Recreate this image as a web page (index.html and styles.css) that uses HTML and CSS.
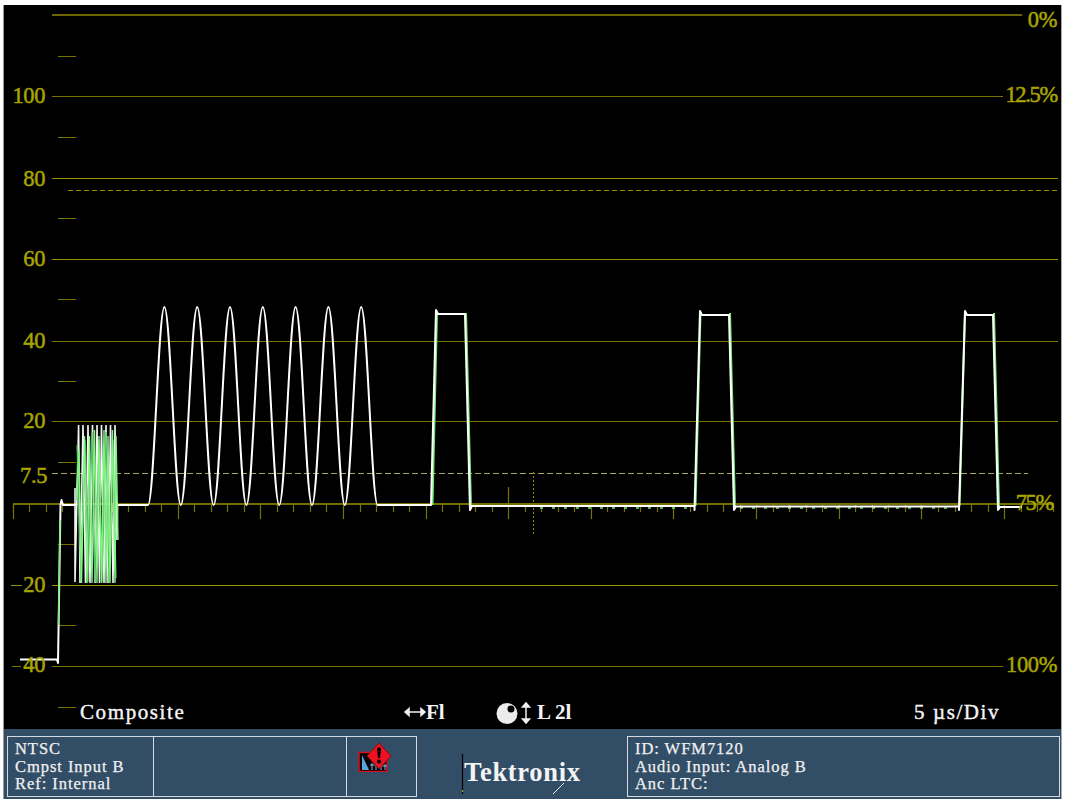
FILE: index.html
```html
<!DOCTYPE html>
<html lang="en">
<head>
<meta charset="utf-8">
<title>WFM7120 waveform monitor</title>
<link rel="stylesheet" href="styles.css">
</head>
<body>
<main class="frame">
  <svg class="scope" viewBox="4 5 1057 724" aria-label="Waveform display">
    <g class="grat">
      <path class="dim" d="M52 15H1022"/>
      <path class="mid" d="M52 96.500H1003M52 421.500H1058M52 341.500H1058M52 666.500H1003M12 666.500H21"/>
      <path class="bright" d="M52 178.500H1058M52 259.500H1058M52 585.500H1058M11 585.500H22"/>
      <path class="mid" d="M58 56.500H76M58 137.500H76M58 218.500H76M58 299.500H76M58 381.500H76M58 462.500H76M58 544.500H76M58 625.500H76M58 707.500H76"/>
      <path class="dash" d="M68 190.500H1058"/>
      <path class="dash2" d="M52 473.500H1028"/>
      <path class="base" d="M13 504H1054"/>
      <path class="mid" d="M13.500 504V512M29.500 504V512M46.500 504V512M62.500 504V512M79.500 504V512M112.500 504V512M128.500 504V512M145.500 504V512M161.500 504V512M194.500 504V512M211.500 504V512M227.500 504V512M244.500 504V512M277.500 504V512M293.500 504V512M310.500 504V512M326.500 504V512M360.500 504V512M376.500 504V512M393.500 504V512M409.500 504V512M442.500 504V512M459.500 504V512M475.500 504V512M492.500 504V512M525.500 504V512M541.500 504V512M558.500 504V512M574.500 504V512M607.500 504V512M624.500 504V512M640.500 504V512M657.500 504V512M690.500 504V512M707.500 504V512M723.500 504V512M740.500 504V512M773.500 504V512M789.500 504V512M806.500 504V512M822.500 504V512M855.500 504V512M872.500 504V512M888.500 504V512M905.500 504V512M938.500 504V512M955.500 504V512M971.500 504V512M988.500 504V512M1021.500 504V512M1037.500 504V512M1053.500 504V512"/>
      <path class="mid" d="M13.500 504V519M95.500 504V519M178.500 504V519M260.500 504V519M343.500 504V519M426.500 504V519M508.500 487V519M591.500 504V519M673.500 504V519M756.500 504V519M839.500 504V519M921.500 504V519M1004.500 504V519"/>
      <path class="dot" d="M533.500 472V535"/>
    </g>

    <g class="wave">
      <path class="trace-green" d="M432.500 505L437 313M466 313L471 507M695.500 506L700.500 313M730 313L735 507M959.500 506L965 313M994 313L999 507"/>
      <path class="trace-noise" d="M540 508H695M740 508H955"/>
      <polyline class="burst-white" points="75,488 75,582 78.600,425 80,583 83,425 85.500,583 88,425 90,583 92.500,425 95,583 97,425 99.500,583 101.500,425 104,583 106,425 108,583 110.500,425 113,583 115,425 117,540 117.500,505"/>
      <polyline class="burst-fill" points="77,445 81,580 85,440 88,582 92,432 95,582 99,440 102,582 106,432 109,582 113,440 116,578"/>
      <polyline class="burst-green" points="76,500 79,450 81.500,583 84.500,436 87,583 89.500,436 92,583 94.500,430 97,583 99,436 101.500,583 104,430 106,583 108,436 110,583 112.500,430 115,583 116,436 118,540"/>
      <path class="trace" d="M20 659.500H57L58 663L60.500 505L61.500 500L63 505H76M118 505H148c5.970 0 10.430-198 16.400-198c5.970 0 10.430 198 16.400 198c5.970 0 10.430-198 16.400-198c5.970 0 10.430 198 16.400 198c5.970 0 10.430-198 16.400-198c5.970 0 10.430 198 16.400 198c5.970 0 10.430-198 16.400-198c5.970 0 10.430 198 16.400 198c5.970 0 10.430-198 16.400-198c5.970 0 10.430 198 16.400 198c5.970 0 10.430-198 16.400-198c5.970 0 10.430 198 16.400 198c5.970 0 10.430-198 16.400-198c5.970 0 10.430 198 16.400 198H431L436 310L438 314H465L470 510L472 506H694.500V510L700 311L702 315H729L734 510L736 506.500H959V510L965 311L967 315H993L998 510L1000 507H1022"/>
      <path class="trace-top" d="M58.500 625L60 520"/>
    </g>

    <g class="lab">
      <text x="45" y="103">100</text>
      <text x="45" y="186">80</text>
      <text x="45" y="266">60</text>
      <text x="45" y="348">40</text>
      <text x="45" y="428">20</text>
      <text x="47" y="483">7.5</text>
      <text x="45" y="592">20</text>
      <text x="45" y="672">40</text>
    </g>
    <g class="lab">
      <text x="1057" y="27">0%</text>
      <text x="1057" y="102" class="tight">12.5%</text>
      <text x="1053" y="510" class="tight">75%</text>
      <text x="1057" y="672">100%</text>
    </g>

    <g class="hud">
      <text x="80" y="719" class="hud-wide">Composite</text>
      <text x="426" y="719">Fl</text>
      <text x="537" y="719">L 2l</text>
      <text x="914" y="719" class="hud-wide">5 µs/Div</text>
    </g>
    <path class="arrow" d="M405 712H425M409 708.500L405 712L409 715.500ZM421 708.500L425 712L421 715.500Z"/>
    <path class="arrow" d="M526 703V723M522.500 707L526 703L529.500 707ZM522.500 719L526 723L529.500 719Z"/>
    <circle class="knob" cx="507" cy="713.500" r="10.500"/>
    <circle class="knob-hole" cx="511" cy="709" r="3.500"/>
  </svg>

  <footer class="footer">
    <section class="box box-left">
      <div class="cell cell-a">
        <div>NTSC</div>
        <div>Cmpst Input B</div>
        <div>Ref: Internal</div>
      </div>
      <div class="cell cell-b"></div>
      <div class="cell cell-c">
        <svg class="alarm" viewBox="0 0 34 30" aria-label="Alarm">
          <rect x="1" y="10.500" width="28" height="19" fill="#000" stroke="#d8101c" stroke-width="1.500"/>
          <path d="M4 28V13L11 28Z" fill="#5aa6dc"/>
          <path d="M14 28V21M18 28V21M12 23H20M23 28V22M27 28V22M22 24H29" stroke="#7cc0ee" stroke-width="1" fill="none"/>
          <path d="M21 1L33 14L21 27L9 14Z" fill="#ee1120" stroke="#8e0a12" stroke-width="1"/>
          <path d="M19 7C19 5 23 5 23 7L22 16H20Z" fill="#000"/>
          <circle cx="21" cy="19.500" r="2" fill="#000"/>
        </svg>
      </div>
    </section>
    <div class="logo-area">
      <svg class="logo" viewBox="0 0 124 44" aria-label="Tektronix logo">
        <path d="M2.500 0V40" stroke="#000" stroke-width="1.200"/>
        <path d="M2.500 36V38" stroke="#a8a800" stroke-width="1.200"/>
        <text x="4" y="27" class="logo-text">Tektronix</text>
        <path d="M93 40L104 29" stroke="#f0f0f0" stroke-width="1"/>
      </svg>
    </div>
    <section class="box box-right">
      <div class="cell">
        <div>ID: WFM7120</div>
        <div>Audio Input: Analog B</div>
        <div>Anc LTC:</div>
      </div>
    </section>
  </footer>
</main>
</body>
</html>
```

FILE: styles.css
```css
html, body {
  margin: 0;
  padding: 0;
  background: #fff;
}
.frame {
  width: 1057px;
  height: 794px;
  margin: 5px 0 0 4px;
  display: flex;
  flex-direction: column;
  font-family: "Liberation Serif", serif;
  box-shadow: -1px 0 0 #999, 1px 0 0 #aaa;
}
.scope {
  display: block;
  width: 1057px;
  height: 724px;
  flex: none;
  background: #000;
}
.grat path { fill: none; stroke-width: 1.2; }
.grat .dim { stroke: #6b6600; stroke-width: 1.8; }
.mid { stroke: #787400; }
.bright { stroke: #969200; }
.grat .base { stroke: #9a9600; stroke-width: 1.4; }
.dash { stroke: #949000; stroke-dasharray: 5 3; }
.dash2 { stroke: #a8a660; stroke-dasharray: 6 3; }
.grat .dot { stroke: #8f8b00; stroke-dasharray: 2 2; stroke-width: 1; }
.wave path, .wave polyline { fill: none; }
.trace { stroke: #fff; stroke-width: 2; stroke-linejoin: round; }
.trace-top { stroke: #78f078; stroke-width: 1.500; }
.trace-green { stroke: #6fe86f; stroke-width: 2; }
.trace-noise { stroke: #6fe86f; stroke-width: 1.500; stroke-dasharray: 3 9; }
.burst-fill { stroke: #4fc060; stroke-width: 1.200; }
.burst-green { stroke: #80f480; stroke-width: 1.400; }
.burst-white { stroke: #f4f4f4; stroke-width: 1.600; }
.lab text {
  font-size: 22.500px;
  font-weight: 400;
  fill: #a8a400;
  stroke: #a8a400;
  stroke-width: 0.500;
  text-anchor: end;
  letter-spacing: -0.400px;
}
.lab .tight { letter-spacing: -1.300px; }
.hud text {
  font-size: 21px;
  font-weight: 700;
  fill: #f4f4f4;
}
.hud .hud-wide { font-size: 21px; font-weight: 400; stroke: #f4f4f4; stroke-width: 0.400; letter-spacing: 1.600px; }
.arrow { fill: #f0f0f0; stroke: #f0f0f0; stroke-width: 1.500; }
.knob { fill: #ececec; }
.knob-hole { fill: #000; }
.footer {
  flex: 1;
  display: flex;
  align-items: flex-start;
  background: #324d66;
  padding: 7px 0 0 3px;
  color: #f0f0f0;
  font-size: 16.500px;
  line-height: 17.500px;
  letter-spacing: 0.950px;
  -webkit-text-stroke: 0.250px #f0f0f0;
}
.box {
  display: flex;
  height: 61px;
  box-sizing: border-box;
  border: 1px solid #d4dae0;
}
.box-left { width: 410px; flex: none; }
.box-right { width: 433px; flex: none; }
.cell { padding: 3px 7px 0; box-sizing: border-box; white-space: nowrap; }
.cell-a { width: 146px; border-right: 1px solid #d4dae0; }
.cell-b { width: 193px; border-right: 1px solid #d4dae0; }
.cell-c { flex: 1; padding: 5px 0 0 11px; }
.alarm { display: block; width: 34px; height: 30px; }
.logo-area {
  width: 210px;
  flex: none;
  padding: 18px 0 0 43px;
  box-sizing: border-box;
}
.logo { display: block; width: 124px; height: 44px; }
.logo-text {
  font-size: 26.500px;
  font-weight: 700;
  fill: #f4f4f4;
  letter-spacing: 0.700px;
}
```
